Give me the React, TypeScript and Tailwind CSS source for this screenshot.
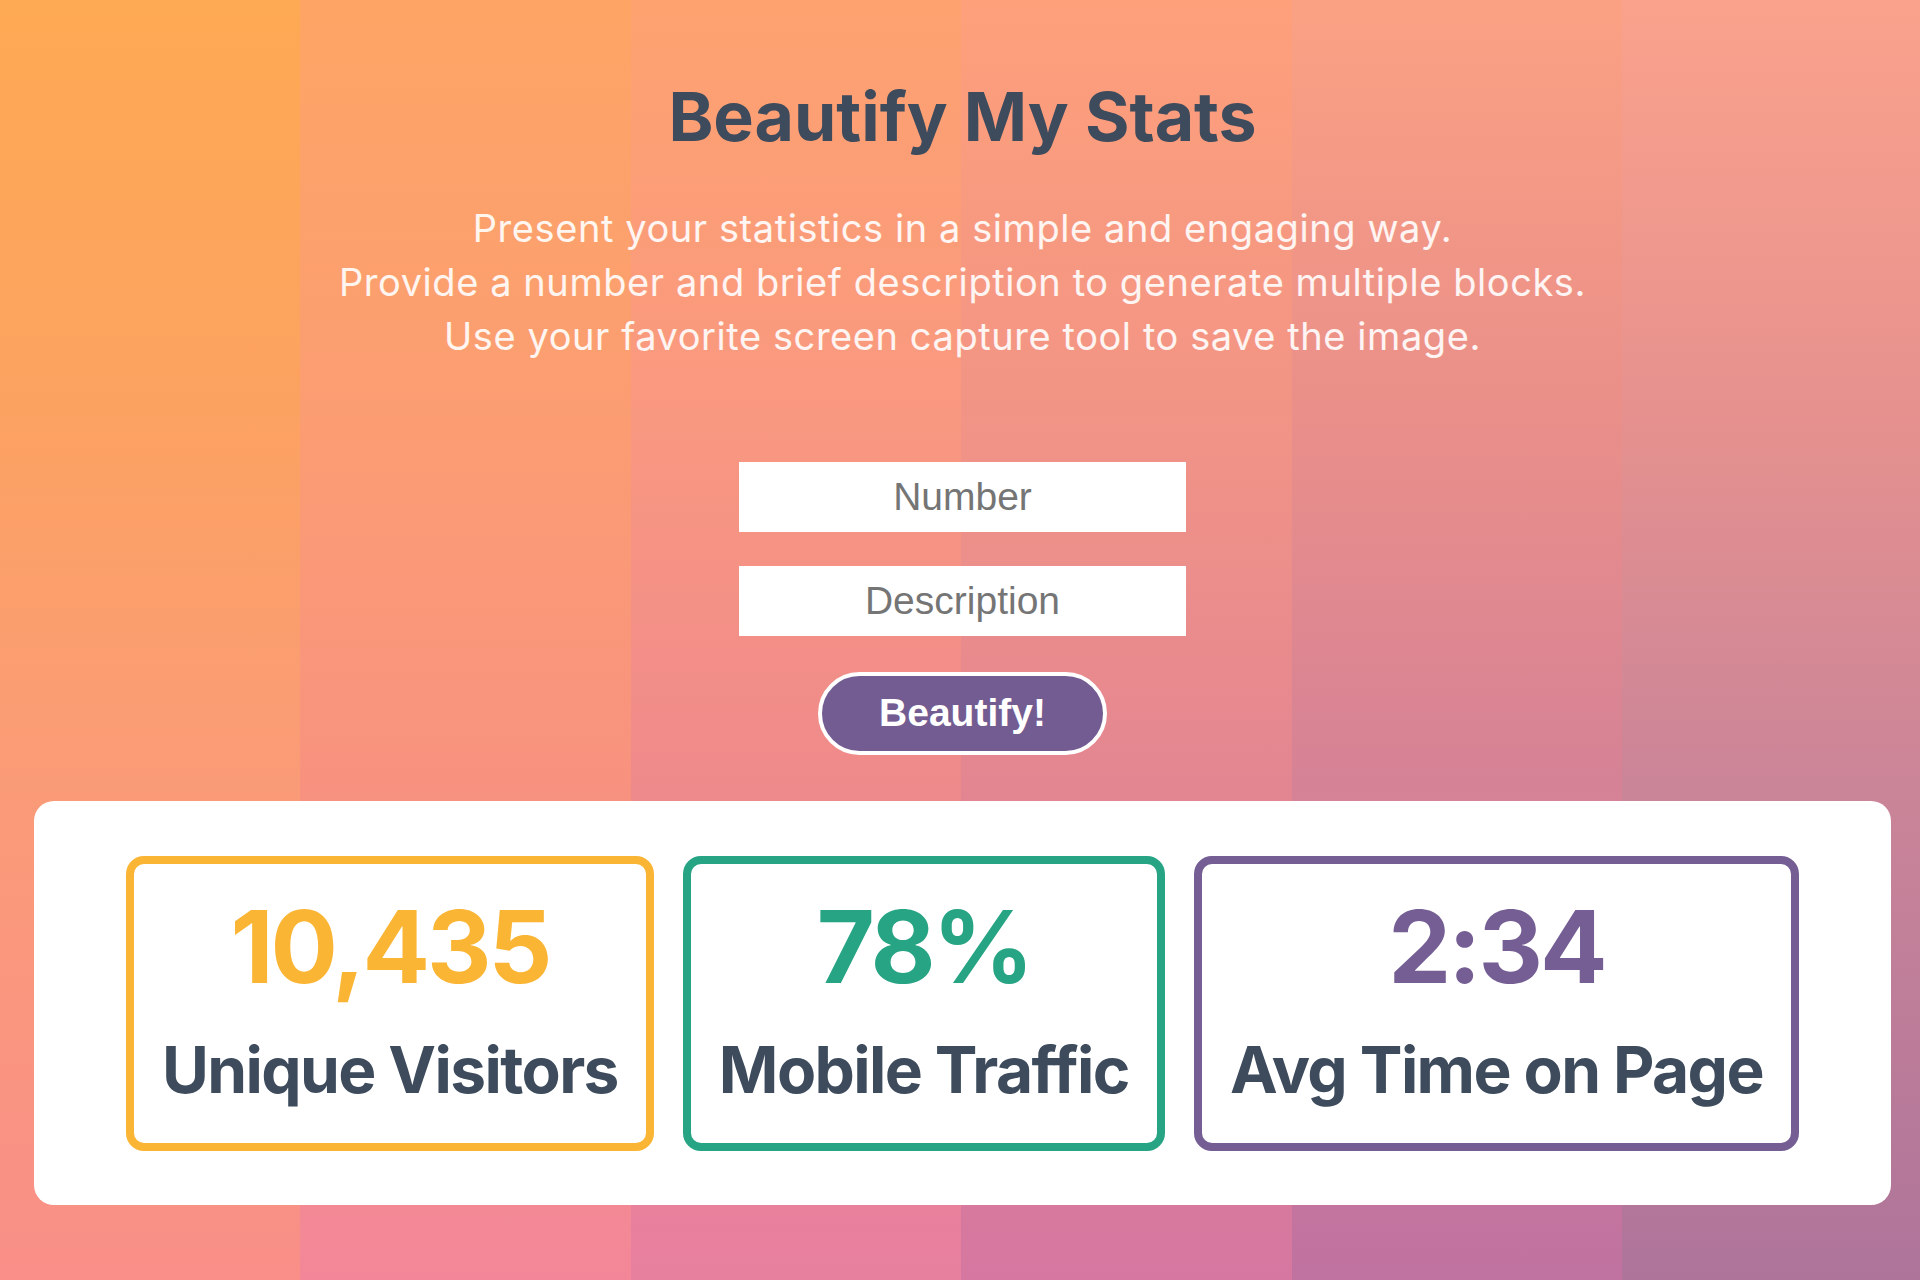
import React from "react";

const stripes = [
    "bg-[linear-gradient(to_bottom,#fea953_0%,#fca261_32%,#fa9b77_61%,#f98f88_100%)]",
    "bg-[linear-gradient(to_bottom,#fea565_0%,#fb9d72_32%,#f8927f_61%,#f38799_100%)]",
    "bg-[linear-gradient(to_bottom,#fea26f_0%,#f99880_32%,#ef8a8b_61%,#e77f9f_100%)]",
    "bg-[linear-gradient(to_bottom,#fea07a_0%,#f29485_32%,#e48691_61%,#d577a0_100%)]",
    "bg-[linear-gradient(to_bottom,#fba183_0%,#ea8f89_32%,#d68296_61%,#c072a0_100%)]",
    "bg-[linear-gradient(to_bottom,#fba28c_0%,#e6918e_32%,#cb8598_61%,#ae749a_100%)]",
];

const stats = [
    { value: "10,435", label: "Unique Visitors", border: "border-[#fbb535]", text: "text-[#fbb535]" },
    { value: "78%", label: "Mobile Traffic", border: "border-[#26a483]", text: "text-[#26a483]" },
    { value: "2:34", label: "Avg Time on Page", border: "border-[#745e94]", text: "text-[#745e94]" },
];

export default function App() {
    return (
        <div className="grid min-h-screen font-[Inter,sans-serif]">
            {/* striped backdrop */}
            <div className="col-start-1 row-start-1 grid grid-cols-[300px_331px_330px_331px_330px_1fr]">
                {stripes.map((s) => (
                    <div key={s} className={s} />
                ))}
            </div>

            <main className="col-start-1 row-start-1 flex flex-col items-center pl-[34px] pr-[29px] pt-[82px] pb-[74px]">
                <h1 className="text-[68px] font-bold leading-none text-[#3d4b5c]">Beautify My Stats</h1>

                <div className="mt-[51px] text-center text-[38px] leading-[54px] tracking-[0.015em] text-white/90">
                    <p>Present your statistics in a simple and engaging way.</p>
                    <p>Provide a number and brief description to generate multiple blocks.</p>
                    <p>Use your favorite screen capture tool to save the image.</p>
                </div>

                {/* Form */}
                <div className="mt-[99px] flex flex-col items-center gap-[34px] font-['Liberation_Sans',Arial,sans-serif]">
                    <input
                        type="text"
                        placeholder="Number"
                        className="h-[70px] w-[447px] bg-white text-center text-[39px] text-[#333] outline-none placeholder:text-[#757575]"
                    />
                    <input
                        type="text"
                        placeholder="Description"
                        className="h-[70px] w-[447px] bg-white text-center text-[39px] text-[#333] outline-none placeholder:text-[#757575]"
                    />
                </div>
                <button className="mt-[36px] h-[83px] w-[289px] rounded-full border-4 border-white bg-[#735c92] font-['Liberation_Sans',Arial,sans-serif] text-[39px] font-bold text-white">
                    Beautify!
                </button>

                {/* Stat blocks */}
                <div className="mt-[46px] flex w-full justify-center gap-[29px] rounded-[20px] bg-white pt-[55px] pb-[54px]">
                    {stats.map((s) => (
                        <div
                            key={s.label}
                            className={`flex flex-col items-center rounded-[18px] border-8 px-7 pt-[33px] pb-[41px] ${s.border}`}
                        >
                            <div className={`text-[100px] font-bold leading-none tracking-[-0.03em] ${s.text}`}>{s.value}</div>
                            <div className="mt-[41px] text-[64px] font-bold leading-none tracking-[-0.025em] text-[#3d4b5c]">
                                {s.label}
                            </div>
                        </div>
                    ))}
                </div>
            </main>
        </div>
    );
}
